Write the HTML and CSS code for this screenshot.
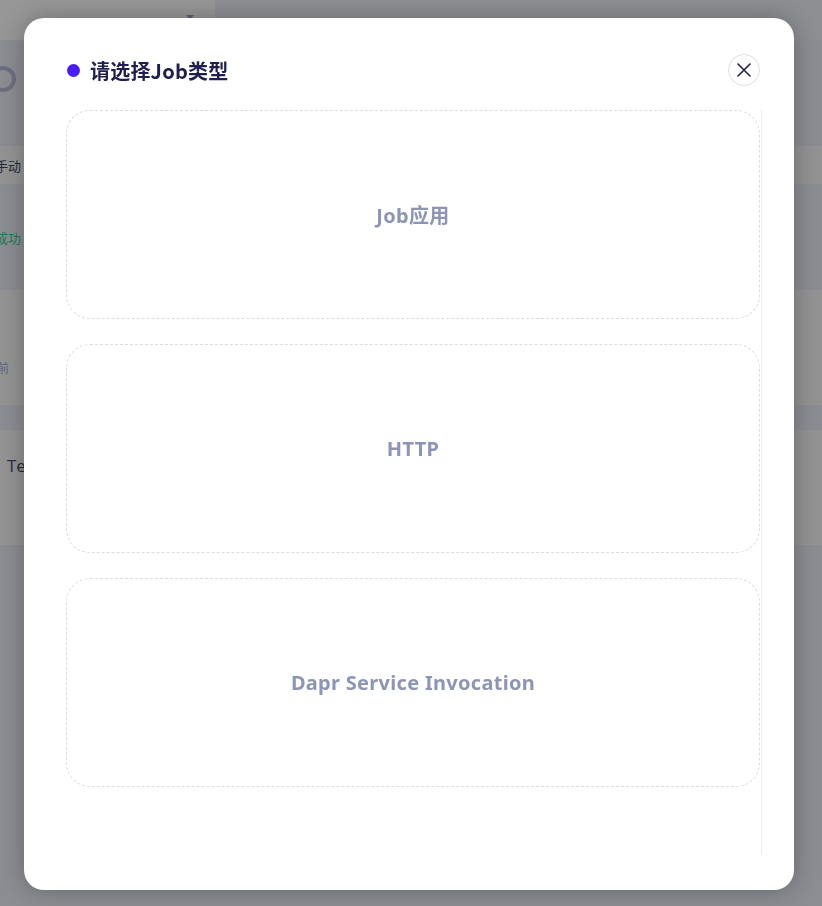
FILE: index.html
```html
<!DOCTYPE html>
<html lang="zh-CN">
<head>
<meta charset="utf-8">
<title>请选择Job类型</title>
<link rel="stylesheet" href="styles.css">
</head>
<body>
<div class="page">
  <div class="topbar">
    <div class="topbar-left"><span class="caret"></span></div>
    <div class="topbar-right"></div>
  </div>
  <div class="row row-dark row-logo"><span class="ring"></span></div>
  <div class="row row-light row-thin"><span class="cut cut-dark">手动</span></div>
  <div class="row row-dark row-mid"><span class="cut cut-green">成功</span></div>
  <div class="row row-light row-tall"><span class="cut cut-muted">前</span></div>
  <div class="row row-dark row-band"></div>
  <div class="row row-light row-tall2"><span class="te">Te</span></div>
  <div class="row row-dark row-rest"></div>
</div>

<div class="modal">
  <div class="modal-header">
    <div class="modal-title"><span class="dot"></span>请选择Job类型</div>
    <button class="close" aria-label="关闭">
      <svg width="18" height="18" viewBox="0 0 18 18"><path d="M3 3 L15 15 M15 3 L3 15" stroke="#1e2352" stroke-width="1.6" stroke-linecap="round" fill="none"/></svg>
    </button>
  </div>
  <div class="modal-body">
    <div class="option">Job应用</div>
    <div class="option">HTTP</div>
    <div class="option">Dapr Service Invocation</div>
  </div>
</div>
</body>
</html>
```

FILE: styles.css
```css
* { box-sizing: border-box; }
html, body { margin: 0; padding: 0; }
body {
  background: #8c8d92;
  font-family: "Noto Sans", "Noto Sans CJK SC", sans-serif;
  width: 822px;
  height: 906px;
  overflow: hidden;
}
.page { display: flex; flex-direction: column; }
.topbar { display: flex; height: 40px; }
.topbar-left { width: 215px; background: #979798; position: relative; }
.topbar-right { flex: 1; background: #8e8f93; }
.caret {
  position: absolute; left: 186px; top: 15px;
  width: 0; height: 0;
  border-left: 4px solid transparent; border-right: 4px solid transparent;
  border-top: 5px solid #5d6070;
}
.row { display: flex; align-items: center; overflow: hidden; }
.row-dark { background: #8c8d92; }
.row-light { background: #939394; }
.row-logo { height: 105px; align-items: flex-start; }
.ring {
  display: block; width: 26px; height: 26px; border-radius: 50%;
  border: 4px solid #6c6f80; margin: 26px 0 0 -10px;
}
.row-thin { height: 40px; border-top: 1px solid #8a8b8f; border-bottom: 1px solid #8a8b8f; }
.row-mid { height: 105px; }
.row-tall { height: 115px; align-items: flex-start; }
.row-band { height: 25px; }
.row-tall2 { height: 115px; align-items: flex-start; }
.row-rest { flex: 1; height: 400px; }
.cut { font-family: "Noto Sans CJK SC", sans-serif; font-size: 13px; margin-left: -5px; }
.cut-dark { color: #262838; }
.cut-green { color: #1e7a55; }
.cut-muted { color: #62667a; font-size: 12px; margin-top: 69px; margin-left: -3px; }
.te { font-family: "Open Sans", "Noto Sans", sans-serif; font-size: 17px; color: #2a2c3c; margin: 24px 0 0 7px; }

.modal {
  position: fixed; left: 24px; top: 18px;
  width: 770px; height: 872px;
  background: #fff; border-radius: 20px;
  box-shadow: 0 0 24px rgba(0, 0, 0, 0.28);
  display: flex; flex-direction: column;
  padding: 0 32px 35px 42px;
}
.modal-header {
  display: flex; align-items: center; justify-content: space-between;
  padding-top: 36px; margin-bottom: 24px; padding-left: 1px;
}
.modal-title {
  display: flex; align-items: center; gap: 10px;
  font-family: "Noto Sans CJK SC", sans-serif;
  font-weight: 700; font-size: 20px; letter-spacing: 0.2px; color: #1e1f4f;
  height: 32px;
}
.dot { width: 13px; height: 13px; border-radius: 50%; background: #4b1bf8; }
.close {
  width: 32px; height: 32px; border-radius: 50%;
  border: 1px solid #dde1ee; background: #fff;
  display: flex; align-items: center; justify-content: center;
  padding: 0; margin-right: 2px; cursor: pointer;
}
.modal-body {
  flex: 1; overflow: auto;
  display: flex; flex-direction: column; gap: 25px;
  border-right: 1px solid #ececec;
  padding-right: 1px;
}
.option {
  height: 209px; flex: none;
  border: 1px dashed #dcdde0; border-radius: 24px;
  display: flex; align-items: center; justify-content: center;
  font-family: "Noto Sans", "Noto Sans CJK SC", sans-serif;
  font-weight: 700; font-size: 20px; letter-spacing: 0.3px; color: #8d95b6;
}
```
